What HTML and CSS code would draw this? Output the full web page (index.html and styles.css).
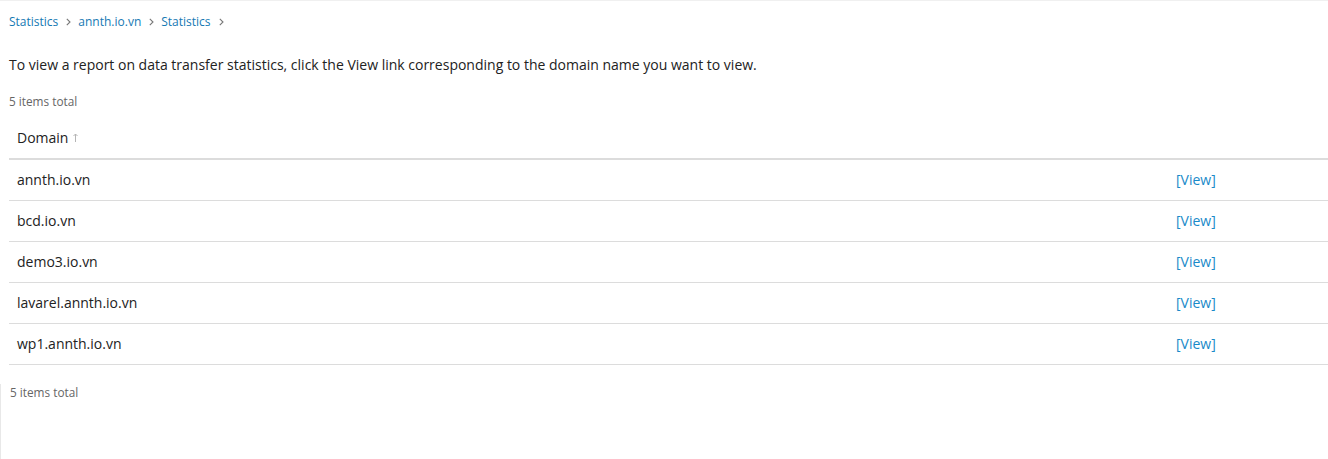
FILE: index.html
```html
<!DOCTYPE html>
<html lang="en">
<head>
<meta charset="utf-8">
<title>Statistics</title>
<link rel="stylesheet" href="styles.css">
</head>
<body>
<div class="page">
  <nav class="breadcrumbs">
    <a href="#" class="crumb">Statistics</a><svg class="sep" width="5" height="8" viewBox="0 0 5 8"><path d="M0.8 0.8 L4 4 L0.8 7.2" fill="none" stroke="#777" stroke-width="1.1"/></svg>
    <a href="#" class="crumb">annth.io.vn</a><svg class="sep" width="5" height="8" viewBox="0 0 5 8"><path d="M0.8 0.8 L4 4 L0.8 7.2" fill="none" stroke="#777" stroke-width="1.1"/></svg>
    <a href="#" class="crumb">Statistics</a><svg class="sep" width="5" height="8" viewBox="0 0 5 8"><path d="M0.8 0.8 L4 4 L0.8 7.2" fill="none" stroke="#777" stroke-width="1.1"/></svg>
  </nav>
  <p class="hint">To view a report on data transfer statistics, click the View link corresponding to the domain name you want to view.</p>
  <div class="total">5 items total</div>
  <table class="list">
    <thead>
      <tr><th class="col-domain">Domain<svg class="sort" width="5" height="9" viewBox="0 0 5 9"><path d="M2.5 9 V1 M0.5 3 L2.5 1 L4.5 3" fill="none" stroke="#b5b5b5" stroke-width="1"/></svg></th><th class="col-action"></th></tr>
    </thead>
    <tbody>
      <tr><td>annth.io.vn</td><td class="col-action"><a href="#">[View]</a></td></tr>
      <tr><td>bcd.io.vn</td><td class="col-action"><a href="#">[View]</a></td></tr>
      <tr><td>demo3.io.vn</td><td class="col-action"><a href="#">[View]</a></td></tr>
      <tr><td>lavarel.annth.io.vn</td><td class="col-action"><a href="#">[View]</a></td></tr>
      <tr><td>wp1.annth.io.vn</td><td class="col-action"><a href="#">[View]</a></td></tr>
    </tbody>
  </table>
  <div class="footer">
    <div class="total">5 items total</div>
  </div>
</div>
</body>
</html>
```
FILE: styles.css
```css
html, body {
  margin: 0;
  padding: 0;
  background: #fff;
}
body {
  font-family: "Open Sans", "Liberation Sans", sans-serif;
  color: #222;
  font-size: 14px;
  height: 459px;
  overflow: hidden;
  border-top: 1px solid #f0f0f0;
  box-sizing: border-box;
}
.page {
  padding-left: 9px;
}
.breadcrumbs {
  display: flex;
  align-items: center;
  height: 19px;
  margin-top: 11px;
  font-size: 12px;
}
.crumb {
  color: #1679b3;
  text-decoration: none;
}
.sep {
  margin: 1px 7px 0 8px;
  flex: none;
}
.hint {
  margin: 24px 0 0;
  line-height: 20px;
}
.total {
  font-size: 11.8px;
  color: #666;
  line-height: 16px;
  margin-top: 18px;
}
.list {
  width: 100%;
  border-collapse: collapse;
  margin-top: 10px;
}
.list th {
  text-align: left;
  font-weight: 400;
  padding: 9px 8px 10px 8px;
  line-height: 20px;
  border-bottom: 2px solid #dcdcdc;
}
.sort {
  margin-left: 5px;
  vertical-align: 1px;
}
.list td {
  padding: 10px 8px 10px 8px;
  line-height: 20px;
  border-bottom: 1px solid #dcdcdc;
}
.list td.col-action {
  width: 144px;
}
.list td.col-action a {
  color: #1a8ac9;
  text-decoration: none;
}
.footer {
  margin-left: -9px;
  padding-left: 9px;
  margin-top: 7px;
  border-left: 1px solid #e8e8e8;
  height: 80px;
}
.footer .total {
  margin-top: 19px;
}
```
